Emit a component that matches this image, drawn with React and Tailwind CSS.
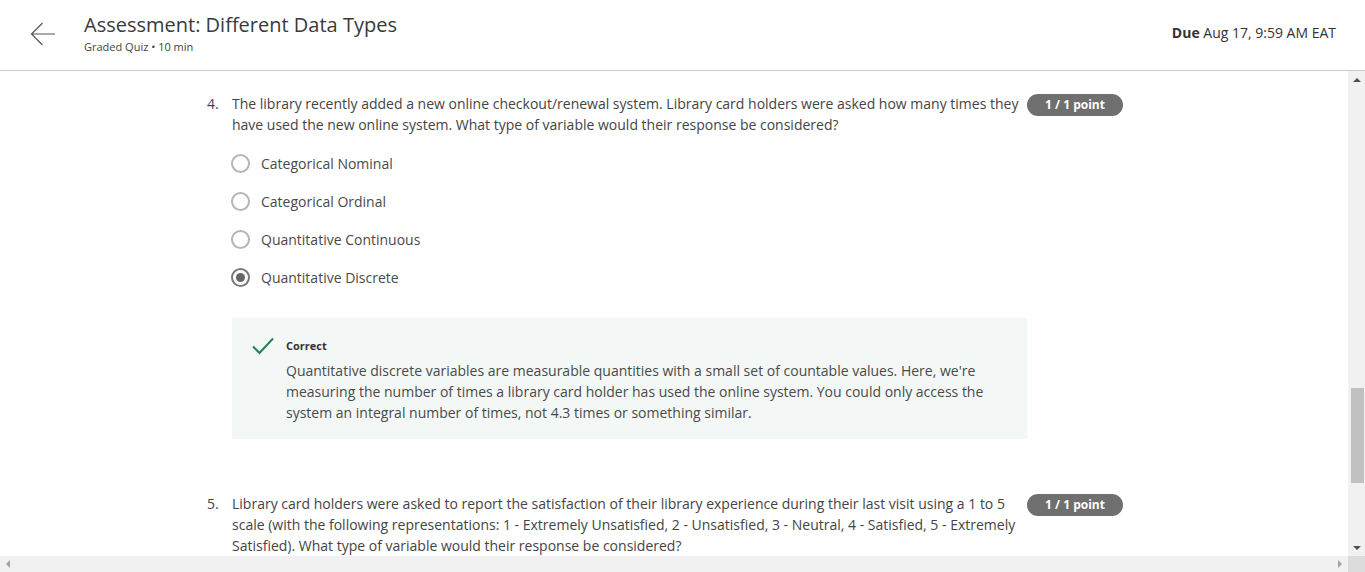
import React from 'react';

const options = [
  { label: 'Categorical Nominal', checked: false },
  { label: 'Categorical Ordinal', checked: false },
  { label: 'Quantitative Continuous', checked: false },
  { label: 'Quantitative Discrete', checked: true },
];

const PointBadge = () => (
  <span className="shrink-0 mt-[1px] w-[96px] h-[22px] rounded-full bg-[#6f6f6f] text-white text-[12px] font-bold flex items-center justify-center leading-none">
    1 / 1 point
  </span>
);

const Radio = ({ checked }) => (
  <span
    className={
      checked
        ? 'w-[19px] h-[19px] rounded-full border-2 border-[#7a7a7a] flex items-center justify-center shrink-0'
        : 'w-[19px] h-[19px] rounded-full border-2 border-[#b5b5b5] shrink-0'
    }
  >
    {checked && <span className="w-[9px] h-[9px] rounded-full bg-[#666]" />}
  </span>
);

const App = () => {
  return (
    <div className="w-[1365px] h-[572px] flex flex-col overflow-hidden bg-white font-['Open_Sans',sans-serif] text-[#333]">
      {/* header */}
      <header className="h-[71px] shrink-0 border-b border-[#c9c9c9] flex items-start pt-[11px] pl-[30px] pr-[29px]">
        <svg width="25" height="24" viewBox="0 0 25 24" className="mt-[11px] shrink-0" fill="none" stroke="#555" strokeWidth="1.2">
          <path d="M25 12H1.5M12.5 1L1.5 12l11 11" />
        </svg>
        <div className="ml-[29px] flex-1">
          <h1 className="text-[20px] leading-[28px] text-[#3a3a3a]">Assessment: Different Data Types</h1>
          <p className="text-[11px] leading-[16px] text-[#444]">Graded Quiz • 10 min</p>
        </div>
        <div className="mt-[12px] text-[14px] leading-[20px] text-[#333]">
          <span className="font-bold">Due</span> Aug 17, 9:59 AM EAT
        </div>
      </header>

      <div className="flex-1 flex min-h-0">
        {/* scrolling content */}
        <main className="flex-1 overflow-hidden pt-[22px] pl-[207px]">
          <div className="w-[916px]">
            {/* question 4 */}
            <div className="flex items-start">
              <span className="w-[25px] shrink-0 text-[14px] leading-[21px] text-[#444]">4.</span>
              <p className="flex-1 pr-[4px] text-[14px] leading-[21px] text-[#444]">
                The library recently added a new online checkout/renewal system. Library card holders were asked how many times they have used the new online system. What type of variable would their response be considered?
              </p>
              <PointBadge />
            </div>

            <div className="ml-[24px] mt-[9px]">
              {options.map((o) => (
                <div key={o.label} className="h-[38px] flex items-center gap-[11px]">
                  <Radio checked={o.checked} />
                  <span className="text-[14px] text-[#4a4a4a]">{o.label}</span>
                </div>
              ))}
            </div>

            <div className="ml-[25px] mt-[22px] w-[795px] bg-[#f3f8f6] pt-[19px] pb-[16px] pl-[20px] pr-[36px] flex items-start">
              <svg width="22" height="18" viewBox="0 0 22 18" className="shrink-0" fill="none" stroke="#1f8354" strokeWidth="2">
                <path d="M1 9.5l6.5 6.5L21 1.5" />
              </svg>
              <div className="ml-[12px]">
                <p className="mt-[1px] text-[11px] leading-[16px] font-bold text-[#333]">Correct</p>
                <p className="mt-[6px] text-[14px] leading-[21px] text-[#4a4a4a]">
                  Quantitative discrete variables are measurable quantities with a small set of countable values. Here, we're measuring the number of times a library card holder has used the online system. You could only access the system an integral number of times, not 4.3 times or something similar.
                </p>
              </div>
            </div>

            {/* question 5 */}
            <div className="flex items-start mt-[54px]">
              <span className="w-[25px] shrink-0 text-[14px] leading-[21px] text-[#444]">5.</span>
              <p className="flex-1 pr-[4px] text-[14px] leading-[21px] text-[#444]">
                Library card holders were asked to report the satisfaction of their library experience during their last visit using a 1 to 5 scale (with the following representations: 1 - Extremely Unsatisfied, 2 - Unsatisfied, 3 - Neutral, 4 - Satisfied, 5 - Extremely Satisfied). What type of variable would their response be considered?
              </p>
              <PointBadge />
            </div>
          </div>
        </main>

        {/* vertical scrollbar */}
        <div className="w-[17px] shrink-0 bg-[#f1f1f1] flex flex-col items-center">
          <div className="h-[17px] w-full flex items-center justify-center">
            <span className="w-0 h-0 border-l-[4px] border-r-[4px] border-b-[4px] border-l-transparent border-r-transparent border-b-[#505050]" />
          </div>
          <div className="mt-[300px] w-[13px] ml-[1px] h-[95px] bg-[#c1c1c1]" />
          <div className="flex-1" />
          <div className="h-[17px] w-full flex items-center justify-center">
            <span className="w-0 h-0 border-l-[4px] border-r-[4px] border-t-[4px] border-l-transparent border-r-transparent border-t-[#505050]" />
          </div>
        </div>
      </div>

      {/* horizontal scrollbar */}
      <div className="h-[16px] shrink-0 flex bg-[#f1f1f1]">
        <div className="flex-1 flex items-center justify-between px-[6px]">
          <span className="w-0 h-0 border-t-[4px] border-b-[4px] border-r-[4px] border-t-transparent border-b-transparent border-r-[#a3a3a3]" />
          <span className="w-0 h-0 border-t-[4px] border-b-[4px] border-l-[4px] border-t-transparent border-b-transparent border-l-[#a3a3a3]" />
        </div>
        <div className="w-[17px] bg-[#dcdcdc]" />
      </div>
    </div>
  );
};

export default App;
